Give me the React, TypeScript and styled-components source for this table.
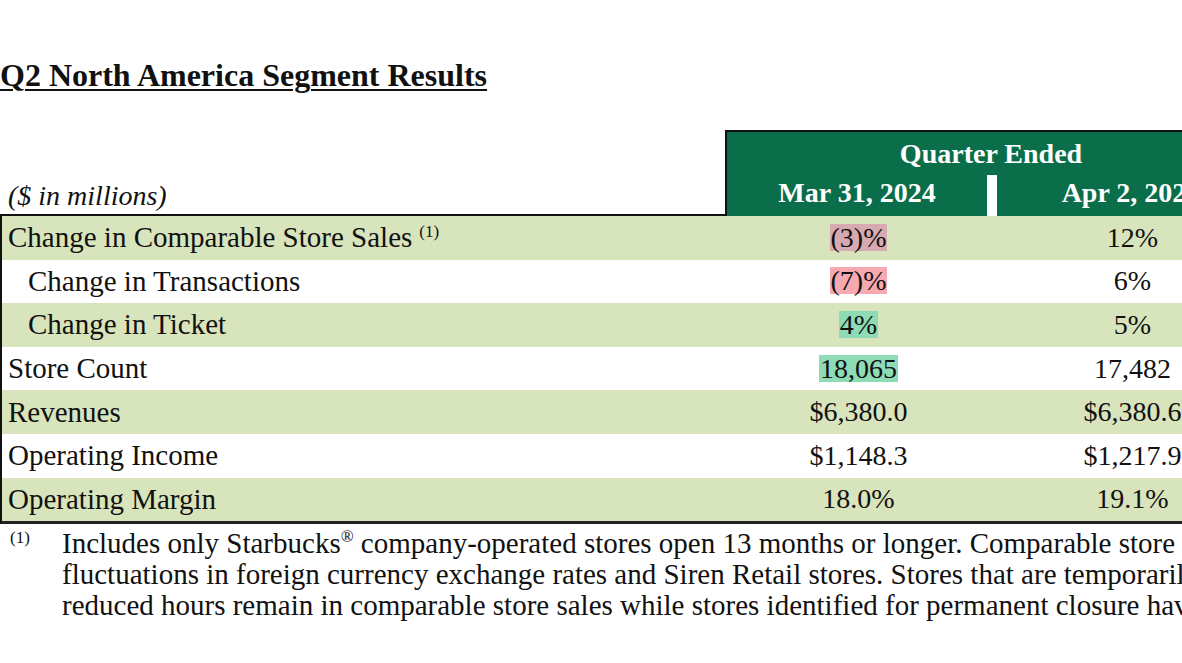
import React from "react";
import styled, { createGlobalStyle } from "styled-components";

const Global = createGlobalStyle`
  html, body { margin: 0; padding: 0; background: #fff; overflow: hidden; }
  body { font-family: "Liberation Serif", "Times New Roman", serif; color: #111; }
`;

const Page = styled.div`
  width: 1265px;
  padding-top: 57px;
`;

const Title = styled.h2`
  margin: 0;
  font-size: 32px;
  line-height: 36px;
  font-weight: bold;
  text-decoration: underline;
  text-decoration-thickness: 2px;
  text-underline-offset: 3px;
  color: #111;
`;

const HeaderRow = styled.div`
  display: grid;
  grid-template-columns: 727px 1fr;
  margin-top: 37px;
  height: 86px;
`;

const UnitsCell = styled.div`
  display: flex;
  align-items: flex-end;
  padding: 0 0 2px 8px;
  font-style: italic;
  font-size: 28px;
  border-bottom: 2px solid #111;
`;

const GreenHead = styled.div`
  background: #0b6e4a;
  border-top: 2px solid #111;
  border-left: 2px solid #111;
  color: #fff;
  font-weight: bold;
  font-size: 28px;
  display: grid;
  grid-template-rows: 43px 1fr;
  margin-left: -2px;
`;

const HeadTitle = styled.div`
  display: flex;
  align-items: center;
  justify-content: center;
  padding-right: 10px;
`;

const DateRow = styled.div`
  display: grid;
  grid-template-columns: 260px 10px 1fr;
`;

const DateCell = styled.div`
  display: flex;
  align-items: flex-start;
  justify-content: center;
  padding-top: 2px;
`;

const Divider = styled.div`
  background: #fff;
`;

const Body = styled.div`
  border-left: 2px solid #111;
  border-bottom: 3px solid #222;
`;

const Row = styled.div<{ $shade: boolean }>`
  display: grid;
  grid-template-columns: 725px 263px 10px 1fr;
  height: 43.6px;
  align-items: center;
  background: ${(p) => (p.$shade ? "#d8e4bc" : "#fff")};
  font-size: 28px;
`;

const Label = styled.div<{ $indent: boolean }>`
  padding-left: ${(p) => (p.$indent ? "26px" : "6px")};
  font-size: 29px;
  white-space: nowrap;
`;

const Sup = styled.sup`
  font-size: 17px;
  vertical-align: 10px;
  line-height: 0;
  margin-left: 7px;
`;

const Value = styled.div`
  text-align: center;
  white-space: nowrap;
`;

const Mark = styled.span<{ $bg: string }>`
  display: inline-block;
  background: ${(p) => p.$bg};
  line-height: 27px;
  padding: 0 1px;
`;

const Footnote = styled.div`
  display: grid;
  grid-template-columns: 62px 1fr;
  padding-top: 4px;
  font-size: 29px;
  line-height: 31px;
`;

const NoteMark = styled.div`
  font-size: 17px;
  line-height: 20px;
  padding-left: 10px;
  padding-top: 0px;
`;

const NoteLine = styled.div`
  white-space: nowrap;
`;

const RegSup = styled.sup`
  font-size: 17px;
  vertical-align: 11px;
  line-height: 0;
`;

type Cell = { text: string; bg?: string };
type RowData = { label: React.ReactNode; indent?: boolean; a: Cell; b: Cell };

const rows: RowData[] = [
  {
    label: (
      <>
        Change in Comparable Store Sales<Sup>(1)</Sup>
      </>
    ),
    a: { text: "(3)%", bg: "#d6aab0" },
    b: { text: "12%" },
  },
  { label: "Change in Transactions", indent: true, a: { text: "(7)%", bg: "#f7a9b1" }, b: { text: "6%" } },
  { label: "Change in Ticket", indent: true, a: { text: "4%", bg: "#8ddcb6" }, b: { text: "5%" } },
  { label: "Store Count", a: { text: "18,065", bg: "#8ddcb6" }, b: { text: "17,482" } },
  { label: "Revenues", a: { text: "$6,380.0" }, b: { text: "$6,380.6" } },
  { label: "Operating Income", a: { text: "$1,148.3" }, b: { text: "$1,217.9" } },
  { label: "Operating Margin", a: { text: "18.0%" }, b: { text: "19.1%" } },
];

const renderCell = (c: Cell) => (c.bg ? <Mark $bg={c.bg}>{c.text}</Mark> : c.text);

export default function App() {
  return (
    <>
      <Global />
      <Page>
        <Title>Q2 North America Segment Results</Title>
        <HeaderRow>
          <UnitsCell>($ in millions)</UnitsCell>
          <GreenHead>
            <HeadTitle>Quarter Ended</HeadTitle>
            <DateRow>
              <DateCell>Mar 31, 2024</DateCell>
              <Divider />
              <DateCell>Apr 2, 2023</DateCell>
            </DateRow>
          </GreenHead>
        </HeaderRow>
        <Body>
          {rows.map((r, i) => (
            <Row key={i} $shade={i % 2 === 0}>
              <Label $indent={!!r.indent}>{r.label}</Label>
              <Value>{renderCell(r.a)}</Value>
              <div />
              <Value>{renderCell(r.b)}</Value>
            </Row>
          ))}
        </Body>
        <Footnote>
          <NoteMark>(1)</NoteMark>
          <div>
            <NoteLine>
              Includes only Starbucks<RegSup>®</RegSup> company-operated stores open 13 months or longer. Comparable store sales exclude the effects of
            </NoteLine>
            <NoteLine>
              fluctuations in foreign currency exchange rates and Siren Retail stores. Stores that are temporarily closed or operating at
            </NoteLine>
            <NoteLine>
              reduced hours remain in comparable store sales while stores identified for permanent closure have been removed.
            </NoteLine>
          </div>
        </Footnote>
      </Page>
    </>
  );
}
